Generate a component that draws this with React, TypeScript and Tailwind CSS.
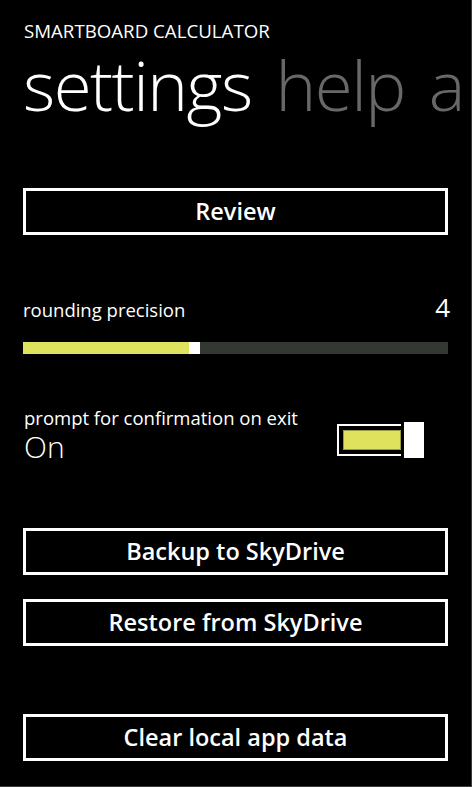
import React from "react";

function OutlineButton({ label, className = "" }: { label: string; className?: string }) {
  return (
    <div
      className={`h-[47px] w-full border-[3px] border-white flex items-center justify-center text-white text-[23.5px] font-semibold leading-none ${className}`}
    >
      {label}
    </div>
  );
}

export default function App() {
  return (
    <div
      className="relative h-[787px] w-full overflow-hidden bg-black text-white border-r border-b border-[#3c3c3c]"
      style={{ fontFamily: '"Open Sans", "Noto Sans", sans-serif' }}
    >
      <div className="px-[23px]">
        <div className="pt-[19px] pl-[1px] text-[18.7px] leading-[24px]">SMARTBOARD CALCULATOR</div>
        <div className="mt-[5px] flex gap-[24px] whitespace-nowrap text-[69px] leading-[72px] font-light tracking-[-1.5px]">
          <span className="text-white">settings</span>
          <span className="text-[#686868]">help</span>
          <span className="text-[#686868]">a</span>
        </div>

        <OutlineButton label="Review" className="mt-[68px]" />

        <div className="mt-[58px] flex items-baseline justify-between h-[28px] text-[18.5px] leading-[28px]">
          <span>rounding precision</span>
          <span className="-mr-[2px] text-[26px] leading-[28px]">4</span>
        </div>

        <div className="mt-[21px] flex h-[12px] w-full">
          <div className="h-full w-[166px] bg-[#dfe25c]" />
          <div className="h-full w-[11px] bg-white" />
          <div className="h-full flex-1 bg-[#333833]" />
        </div>

        <div className="mt-[50px] flex items-start justify-between">
          <div className="pl-[1px]">
            <div className="text-[18.5px] leading-[28px]">prompt for confirmation on exit</div>
            <div className="-mt-[1px] text-[30px] leading-[32px] font-light">On</div>
          </div>
          <div className="mt-[18px] mr-[24px] flex items-center">
            <div className="flex h-[32px] w-[64px] items-center border-l-2 border-t-2 border-b-2 border-white pl-[4px]">
              <div className="h-[20px] flex-1 bg-[#dfe25c] border border-[#9a9c3c]" />
            </div>
            <div className="ml-[3px] h-[36px] w-[20px] bg-white" />
          </div>
        </div>

        <OutlineButton label="Backup to SkyDrive" className="mt-[65px]" />
        <OutlineButton label="Restore from SkyDrive" className="mt-[24px]" />
        <OutlineButton label="Clear local app data" className="mt-[68px]" />
      </div>
    </div>
  );
}
